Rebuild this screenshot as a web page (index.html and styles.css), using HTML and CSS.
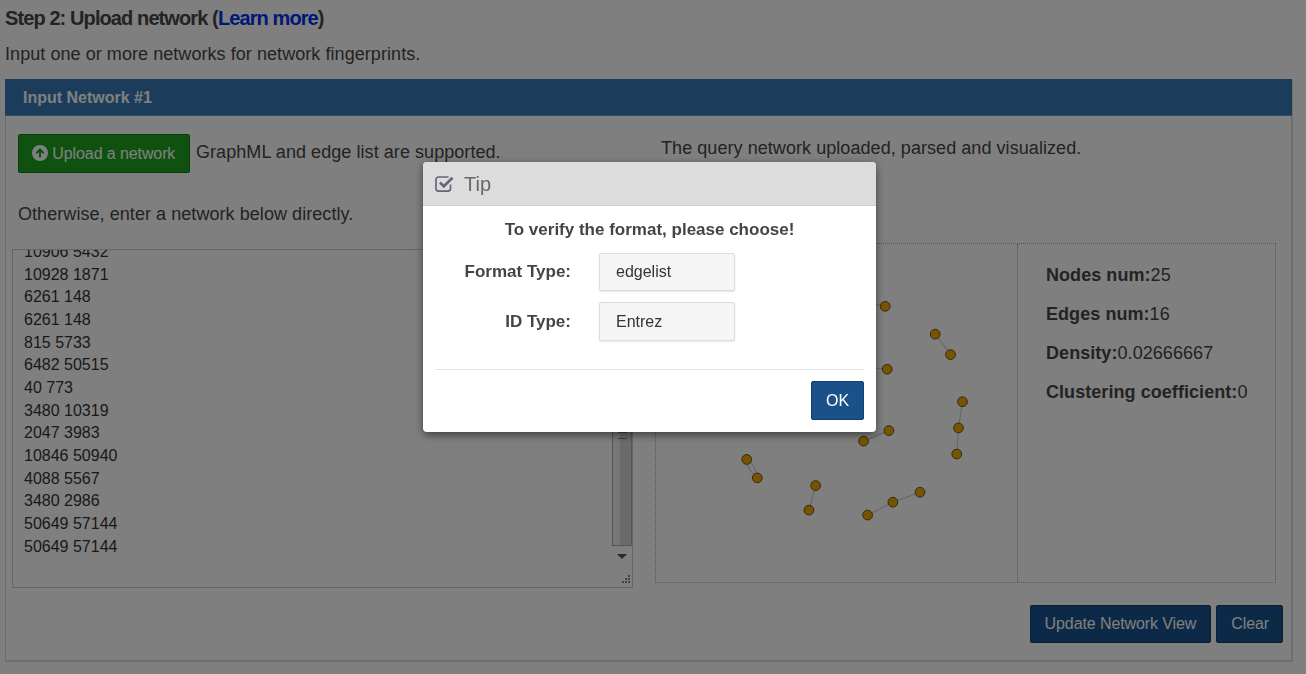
FILE: index.html
```html
<!DOCTYPE html>
<html>
<head>
	<title>Upload network</title>
	<link rel="stylesheet" href="styles.css">
</head>
<body>
	<div class="page">
		<h3 class="step-title">Step 2: Upload network (<a href="#">Learn more</a>)</h3>
		<p class="step-text">Input one or more networks for network fingerprints.</p>

		<div class="panel">
			<div class="panel-heading">Input Network #1</div>
			<div class="panel-body">
				<div class="col-left">
					<div class="upload-row">
						<a class="btn btn-green" href="#">
							<svg class="icon-upload" viewBox="0 0 16 16" width="16" height="16">
								<path fill-rule="evenodd" d="M8 0a8 8 0 1 1 0 16A8 8 0 0 1 8 0zM8 3L3.6 7.6 5 9l2-2v5.5h2V7l2 2 1.4-1.4z"/>
							</svg>
							Upload a network
						</a>
						<span class="hint">GraphML and edge list are supported.</span>
					</div>
					<p class="otherwise">Otherwise, enter a network below directly.</p>
					<div class="edge-box">
						<div class="edge-lines">
							<div>10906 5432</div>
							<div>10928 1871</div>
							<div>6261 148</div>
							<div>6261 148</div>
							<div>815 5733</div>
							<div>6482 50515</div>
							<div>40 773</div>
							<div>3480 10319</div>
							<div>2047 3983</div>
							<div>10846 50940</div>
							<div>4088 5567</div>
							<div>3480 2986</div>
							<div>50649 57144</div>
							<div>50649 57144</div>
						</div>
						<div class="scrollbar">
							<div class="scroll-thumb"><span class="scroll-grip"></span></div>
							<div class="scroll-arrow"></div>
						</div>
						<svg class="grip" viewBox="0 0 12 12" width="12" height="12">
							<path fill="#888" d="M9 1h2v2H9zM6 4h2v2H6zM9 4h2v2H9zM3 7h2v2H3zM6 7h2v2H6zM9 7h2v2H9z"/>
						</svg>
					</div>
				</div>
				<div class="col-right">
					<p class="query-text">The query network uploaded, parsed and visualized.</p>
					<div class="view-box">
						<svg class="graph" viewBox="655 243 362 340" width="361" height="338">
							<g stroke="#d0d0d0" stroke-width="1.2" fill="none">
								<path d="M850 298L885 305.7"/>
								<path d="M935.3 333.7L950.7 354.3"/>
								<path d="M850 366L887 369"/>
								<path d="M962.7 401.7L958.7 428L957 454.3"/>
								<path d="M888.7 430.7L863.3 441.3"/>
								<path d="M745.7 459.7Q746 470 756.3 478.3Q755 465 745.7 459.7"/>
								<path d="M815 486L808.3 510.7"/>
								<path d="M867.3 515.7L892.7 502.7L920 492.7"/>
							</g>
							<g fill="#f2a800" stroke="#5f5220" stroke-width="1">
								<circle cx="885" cy="305.7" r="4.9"/>
								<circle cx="935.3" cy="333.7" r="4.9"/>
								<circle cx="950.7" cy="354.3" r="4.9"/>
								<circle cx="887" cy="369" r="4.9"/>
								<circle cx="962.7" cy="401.7" r="4.9"/>
								<circle cx="958.7" cy="428" r="4.9"/>
								<circle cx="957" cy="454.3" r="4.9"/>
								<circle cx="888.7" cy="430.7" r="4.9"/>
								<circle cx="863.3" cy="441.3" r="4.9"/>
								<circle cx="745.7" cy="459.7" r="4.9"/>
								<circle cx="756.3" cy="478.3" r="4.9"/>
								<circle cx="815" cy="486" r="4.9"/>
								<circle cx="808.3" cy="510.7" r="4.9"/>
								<circle cx="867.3" cy="515.7" r="4.9"/>
								<circle cx="892.7" cy="502.7" r="4.9"/>
								<circle cx="920" cy="492.7" r="4.9"/>
							</g>
						</svg>
						<div class="stats">
							<p><b>Nodes num:</b>25</p>
							<p><b>Edges num:</b>16</p>
							<p><b>Density:</b>0.02666667</p>
							<p><b>Clustering coefficient:</b>0</p>
						</div>
					</div>
				</div>
				<div class="actions">
					<a class="btn btn-blue" href="#">Update Network View</a>
					<a class="btn btn-blue btn-clear" href="#">Clear</a>
				</div>
			</div>
		</div>
	</div>

	<div class="overlay">
		<div class="modal">
			<div class="modal-header">
				<svg class="icon-check" viewBox="0 0 19 16" width="19" height="16">
					<path fill="none" stroke="#667" stroke-width="1.7" d="M15.5 8.500v4a2.600 2.600 0 0 1-2.600 2.600H3.600A2.600 2.600 0 0 1 1 12.500V3.600A2.600 2.600 0 0 1 3.600 1h10"/>
					<path fill="none" stroke="#667" stroke-width="2.600" d="M5 6.500L8.800 10.300 17.500 1.800"/>
				</svg>
				<span>Tip</span>
			</div>
			<div class="modal-body">
				<p class="modal-lead">To verify the format, please choose!</p>
				<div class="field">
					<label>Format Type:</label>
					<div class="field-value">edgelist</div>
				</div>
				<div class="field">
					<label>ID Type:</label>
					<div class="field-value field-tall">Entrez</div>
				</div>
			</div>
			<div class="modal-footer">
				<a class="btn btn-ok" href="#">OK</a>
			</div>
		</div>
	</div>
</body>
</html>
```

FILE: styles.css
```css
body {
	margin: 0;
	font-family: "Liberation Sans", Arial, sans-serif;
	font-size: 18px;
	letter-spacing: 0.06px;
	color: #464646;
	background-color: #fff;
	height: 674px;
	overflow: hidden;
}
.page {
	padding: 0 13px 0 5px;
}
.step-title {
	margin: 0;
	padding-top: 8px;
	font-size: 20px;
	line-height: 21px;
	letter-spacing: -0.9px;
}
.step-title a {
	color: #0033ee;
	text-decoration: none;
}
.step-text {
	margin: 14px 0 0;
	line-height: 22px;
}
.panel {
	margin-top: 14px;
	height: 583px;
	box-sizing: border-box;
	border: 1px solid #ddd;
	border-bottom-width: 2px;
	border-right-width: 2px;
}
.panel-heading {
	height: 37px;
	margin: -1px -1px 0;
	padding-left: 18px;
	line-height: 37px;
	font-size: 16px;
	font-weight: bold;
	letter-spacing: 0;
	color: #fff;
	background-color: #367ab6;
	border-bottom: 1px solid #5ba0c8;
	box-sizing: border-box;
}
.panel-body {
	display: grid;
	grid-template-columns: 621px 620px;
	column-gap: 22px;
	padding: 18px 0 0 6px;
}
.btn {
	display: inline-block;
	box-sizing: border-box;
	text-decoration: none;
	font-size: 16px;
	letter-spacing: -0.1px;
	border-radius: 2px;
	color: #fff;
}
.upload-row {
	display: flex;
	align-items: flex-start;
	padding-left: 6px;
}
.btn-green {
	width: 172px;
	height: 39px;
	line-height: 37px;
	padding-left: 13px;
	background-color: #1fa521;
	border: 1px solid #167a16;
}
.icon-upload {
	fill: #fff;
	vertical-align: -2px;
}
.hint {
	margin-left: 6px;
	line-height: 36px;
}
.otherwise {
	margin: 30px 0 0 6px;
	line-height: 22px;
}
.edge-box {
	position: relative;
	margin-top: 24px;
	height: 339px;
	box-sizing: border-box;
	border: 1px solid #ccc;
	overflow: hidden;
}
.edge-lines {
	margin-top: -9px;
	padding-left: 11px;
	font-size: 16px;
	letter-spacing: 0;
	line-height: 22.65px;
	color: #333;
}
.scrollbar {
	position: absolute;
	top: 0;
	right: 0;
	width: 20px;
	bottom: 20px;
	display: flex;
	flex-direction: column;
	background-color: #fff;
}
.scroll-thumb {
	flex: 1;
	margin-top: 74px;
	display: flex;
	align-items: center;
	justify-content: center;
	background: linear-gradient(to right, #eee 0, #eee 40%, #d6d6d6 40%, #d6d6d6 100%);
	border: 1px solid #aaa;
	box-sizing: border-box;
}
.scroll-grip {
	width: 9px;
	height: 5px;
	border-top: 1px solid #888;
	border-bottom: 1px solid #888;
}
.scroll-arrow {
	height: 21px;
	position: relative;
}
.scroll-arrow::after {
	content: "";
	position: absolute;
	left: 5px;
	top: 8px;
	border: 5px solid transparent;
	border-top-color: #555;
	border-bottom: 0;
}
.grip {
	position: absolute;
	right: 1px;
	bottom: 1px;
}
.query-text {
	margin: 0 0 0 6px;
	padding-top: 3px;
	line-height: 22px;
}
.view-box {
	margin-top: 84px;
	width: 621px;
	height: 340px;
	box-sizing: border-box;
	border: 1px dotted #aaa;
	display: flex;
}
.graph {
	display: block;
	flex: none;
	border-right: 1px dotted #aaa;
}
.stats {
	padding: 20px 0 0 28px;
}
.stats p {
	margin: 0 0 17px;
	line-height: 22px;
}
.actions {
	grid-column: 1 / 3;
	display: flex;
	justify-content: flex-end;
	gap: 5px;
	margin: 17px -8px 0 0;
}
.btn-blue {
	height: 38px;
	line-height: 36px;
	padding: 0 14px;
	background-color: #18528e;
	border: 1px solid #123f6e;
}
.btn-clear {
	padding: 0 13px 0 14px;
}
.overlay {
	position: fixed;
	top: 0;
	left: 0;
	right: 0;
	bottom: 0;
	background-color: rgba(0, 0, 0, 0.5);
}
.modal {
	width: 453px;
	height: 270px;
	margin: 162px 0 0 423px;
	background-color: #fff;
	border-radius: 4px;
	box-shadow: 0 3px 9px rgba(0, 0, 0, 0.5);
	overflow: hidden;
}
.modal-header {
	height: 44px;
	box-sizing: border-box;
	display: flex;
	align-items: center;
	gap: 10px;
	padding: 1px 0 0 12px;
	font-size: 20px;
	letter-spacing: 0;
	color: #666;
	background-color: #dcdcdc;
	border-bottom: 1px solid #ccc;
}
.modal-body {
	height: 164px;
	box-sizing: border-box;
	margin: 0 12px;
	padding-top: 14px;
	border-bottom: 1px solid #e5e5e5;
}
.modal-lead {
	margin: 0 0 14px;
	text-align: center;
	font-size: 17px;
	font-weight: bold;
	letter-spacing: 0;
	color: #444;
	line-height: 19px;
}
.field {
	display: flex;
	align-items: center;
	margin-bottom: 11px;
}
.field label {
	width: 136px;
	text-align: right;
	font-size: 17px;
	font-weight: bold;
	letter-spacing: 0;
	color: #444;
}
.field-value {
	width: 136px;
	height: 38px;
	margin-left: 28px;
	padding-left: 16px;
	box-sizing: border-box;
	font-size: 16px;
	letter-spacing: 0;
	line-height: 35px;
	color: #333;
	background-color: #f5f5f5;
	border: 1px solid #ddd;
	border-radius: 2px;
	box-shadow: 0 1px 2px rgba(0, 0, 0, 0.1);
}
.field-tall {
	height: 39px;
	line-height: 37px;
}
.modal-footer {
	display: flex;
	justify-content: flex-end;
	padding: 11px 12px 0;
}
.btn-ok {
	width: 53px;
	height: 39px;
	line-height: 37px;
	text-align: center;
	background-color: #1a5189;
	border: 1px solid #123f6e;
}
```
